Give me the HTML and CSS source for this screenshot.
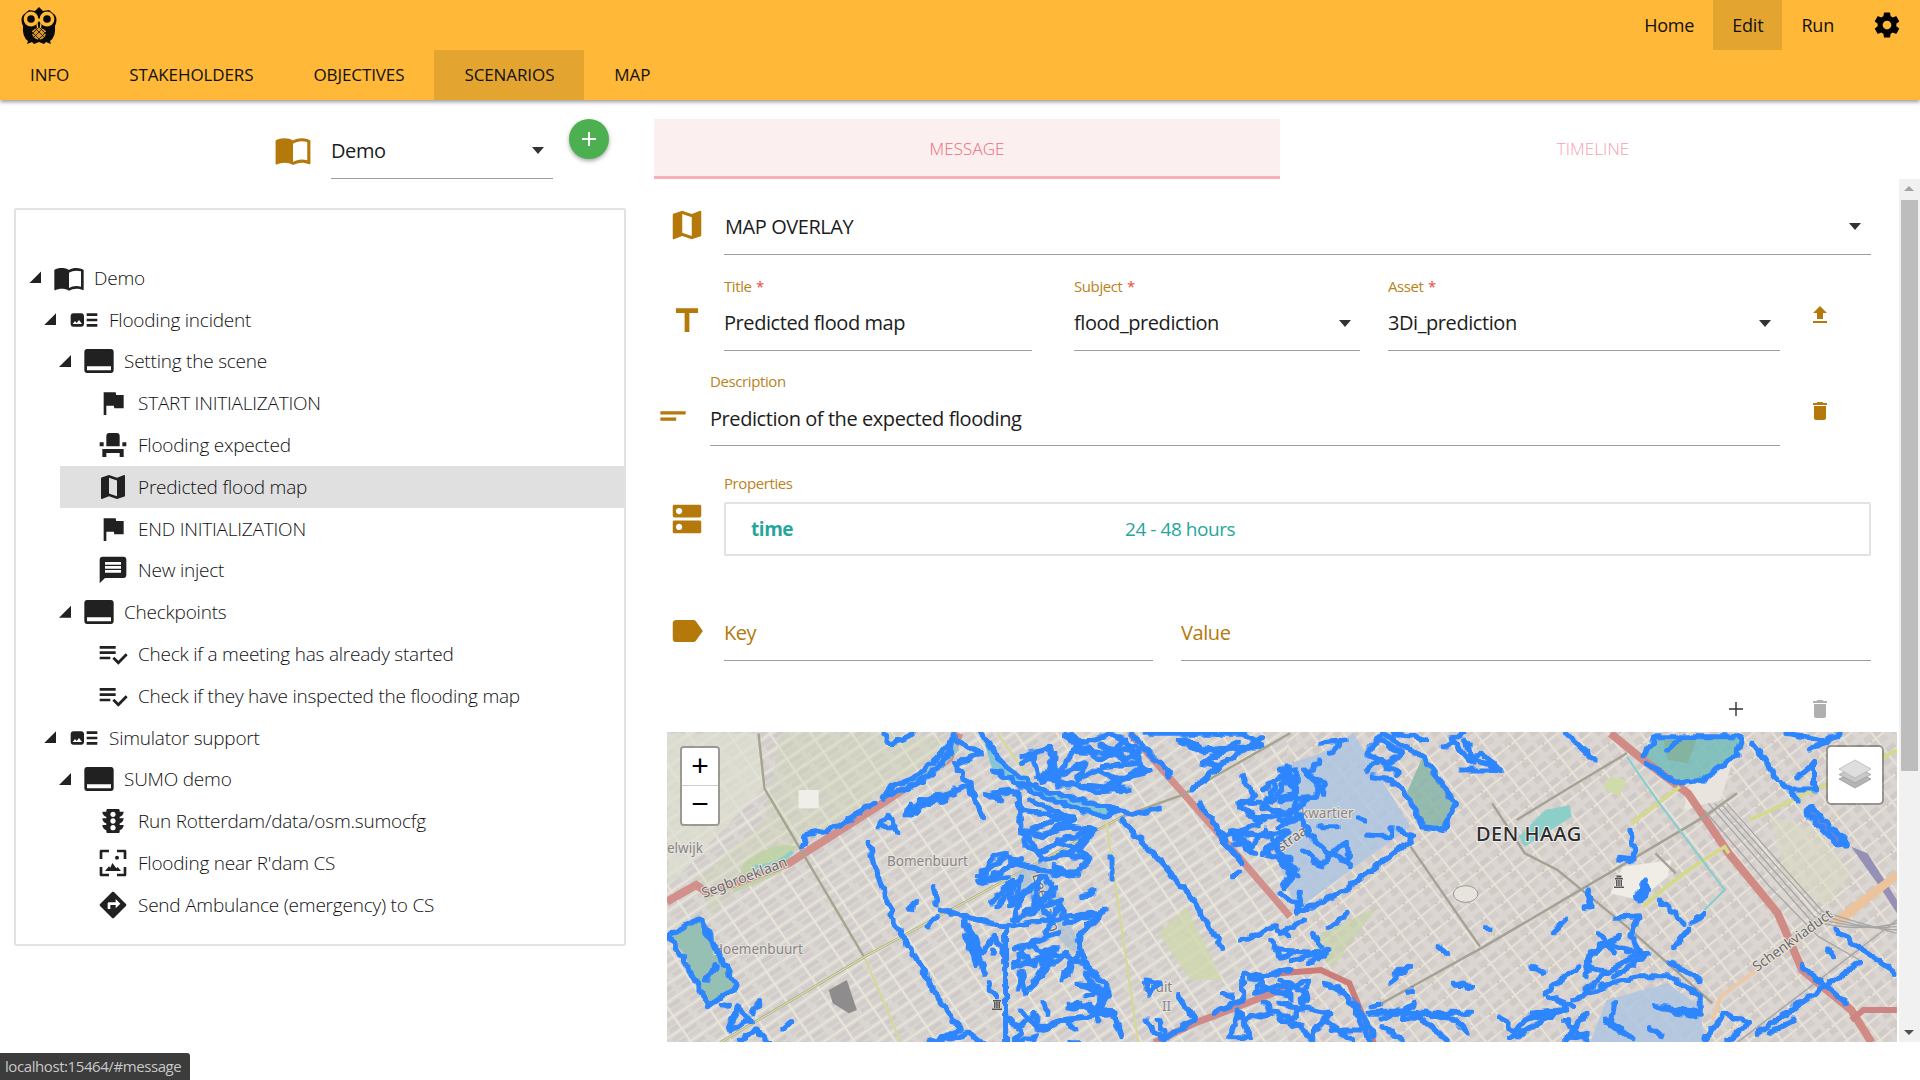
FILE: index.html
```html
<!DOCTYPE html>
<html lang="en">
<head>
<meta charset="utf-8">
<title>Scenario editor</title>
<link rel="stylesheet" href="styles.css">
</head>
<body>
<header class="appbar">
  <div class="appbar-top">
    <svg class="logo" viewBox="0 0 38 38">
      <path d="M3 8 L9 3 L15 4 L19 0 L23 4 L29 3 L35 8 Q38 13 35 19 Q36 30 30 34 L31 37 L26 35 L24 37 L19 35 L14 37 L12 35 L7 37 L8 34 Q2 30 3 19 Q0 13 3 8Z" fill="#0a0a0a"/>
      <circle cx="11" cy="12" r="7.4" fill="#ffb838"/><circle cx="27" cy="12" r="7.4" fill="#ffb838"/>
      <circle cx="11" cy="12" r="3.8" fill="#0a0a0a"/><circle cx="27" cy="12" r="3.8" fill="#0a0a0a"/>
      <path d="M19 11 L22 15 L21 21 H17 L16 15Z" fill="#ffb838"/><path d="M19 14 L20.4 16 L19.8 20 H18.2 L17.6 16Z" fill="#0a0a0a"/>
      <path d="M12 24 Q19 17 26 24 Q27 31 19 33 Q11 31 12 24Z" fill="#d9962a"/>
      <path d="M12 25 L20 33 M15 21 L26 32 M19 20 L27 28 M26 25 L18 33 M23 21 L12 32 M19 20 L11 28" stroke="#0a0a0a" stroke-width=".8" fill="none"/>
    </svg>
    <nav class="topnav">
      <a class="topnav-link">Home</a>
      <a class="topnav-link is-active">Edit</a>
      <a class="topnav-link">Run</a>
      <svg class="gear" viewBox="0 0 24 24"><path d="M19.43 12.98c.04-.32.07-.64.07-.98s-.03-.66-.07-.98l2.11-1.65c.19-.15.24-.42.12-.64l-2-3.46c-.12-.22-.39-.3-.61-.22l-2.49 1c-.52-.4-1.08-.73-1.69-.98l-.38-2.65C14.46 2.18 14.25 2 14 2h-4c-.25 0-.46.18-.49.42l-.38 2.65c-.61.25-1.17.59-1.69.98l-2.49-1c-.23-.09-.49 0-.61.22l-2 3.46c-.13.22-.07.49.12.64l2.11 1.65c-.04.32-.07.65-.07.98s.03.66.07.98l-2.11 1.65c-.19.15-.24.42-.12.64l2 3.46c.12.22.39.3.61.22l2.49-1c.52.4 1.08.73 1.69.98l.38 2.65c.03.24.24.42.49.42h4c.25 0 .46-.18.49-.42l.38-2.65c.61-.25 1.17-.59 1.69-.98l2.49 1c.23.09.49 0 .61-.22l2-3.46c.12-.22.07-.49-.12-.64l-2.11-1.65zM12 15.5c-1.93 0-3.5-1.57-3.5-3.5s1.57-3.5 3.5-3.5 3.5 1.57 3.5 3.5-1.57 3.5-3.5 3.5z"/></svg>
    </nav>
  </div>
  <nav class="apptabs">
    <a class="apptab">INFO</a>
    <a class="apptab">STAKEHOLDERS</a>
    <a class="apptab">OBJECTIVES</a>
    <a class="apptab is-active">SCENARIOS</a>
    <a class="apptab">MAP</a>
  </nav>
</header>

<main class="workspace">
  <aside class="sidebar">
    <div class="scenario-select">
      <svg class="icon-lg gold" viewBox="0 0 24 24"><path d="M21 5c-1.11-.35-2.33-.5-3.5-.5-1.95 0-4.05.4-5.5 1.5-1.45-1.1-3.55-1.5-5.5-1.5S2.45 4.9 1 6v14.65c0 .25.25.5.5.5.1 0 .15-.05.25-.05C3.1 20.45 5.05 20 6.5 20c1.95 0 4.05.4 5.5 1.5 1.35-.85 3.8-1.5 5.5-1.5 1.65 0 3.35.3 4.75 1.05.1.05.15.05.25.05.25 0 .5-.25.5-.5V6c-.6-.45-1.25-.75-2-1zm0 13.5c-1.1-.35-2.3-.5-3.5-.5-1.7 0-4.15.65-5.5 1.5V8c1.35-.85 3.8-1.5 5.5-1.5 1.2 0 2.4.15 3.5.5v11.5z"/></svg>
      <div class="select select-scenario"><span>Demo</span><i class="caret"></i></div>
      <button class="fab"><svg viewBox="0 0 24 24"><path d="M19 13h-6v6h-2v-6H5v-2h6V5h2v6h6v2z"/></svg></button>
    </div>
    <div class="tree">
      <div class="node lv0"><i class="twist"></i><svg class="node-icon" viewBox="0 0 24 24"><use href="#i-book"/></svg><span>Demo</span></div>
      <div class="node lv1"><i class="twist"></i><svg class="node-icon" viewBox="0 0 24 24"><use href="#i-art"/></svg><span>Flooding incident</span></div>
      <div class="node lv2"><i class="twist"></i><svg class="node-icon" viewBox="0 0 24 24"><use href="#i-cta"/></svg><span>Setting the scene</span></div>
      <div class="node lv3"><i class="twist-none"></i><svg class="node-icon" viewBox="0 0 24 24"><use href="#i-flag"/></svg><span>START INITIALIZATION</span></div>
      <div class="node lv3"><i class="twist-none"></i><svg class="node-icon" viewBox="0 0 24 24"><use href="#i-seat"/></svg><span>Flooding expected</span></div>
      <div class="node lv3 is-selected"><i class="twist-none"></i><svg class="node-icon" viewBox="0 0 24 24"><use href="#i-map"/></svg><span>Predicted flood map</span></div>
      <div class="node lv3"><i class="twist-none"></i><svg class="node-icon" viewBox="0 0 24 24"><use href="#i-flag"/></svg><span>END INITIALIZATION</span></div>
      <div class="node lv3"><i class="twist-none"></i><svg class="node-icon" viewBox="0 0 24 24"><use href="#i-msg"/></svg><span>New inject</span></div>
      <div class="node lv2"><i class="twist"></i><svg class="node-icon" viewBox="0 0 24 24"><use href="#i-cta"/></svg><span>Checkpoints</span></div>
      <div class="node lv3"><i class="twist-none"></i><svg class="node-icon" viewBox="0 0 24 24"><use href="#i-check"/></svg><span>Check if a meeting has already started</span></div>
      <div class="node lv3"><i class="twist-none"></i><svg class="node-icon" viewBox="0 0 24 24"><use href="#i-check"/></svg><span>Check if they have inspected the flooding map</span></div>
      <div class="node lv1"><i class="twist"></i><svg class="node-icon" viewBox="0 0 24 24"><use href="#i-art"/></svg><span>Simulator support</span></div>
      <div class="node lv2"><i class="twist"></i><svg class="node-icon" viewBox="0 0 24 24"><use href="#i-cta"/></svg><span>SUMO demo</span></div>
      <div class="node lv3"><i class="twist-none"></i><svg class="node-icon" viewBox="0 0 24 24"><use href="#i-traffic"/></svg><span>Run Rotterdam/data/osm.sumocfg</span></div>
      <div class="node lv3"><i class="twist-none"></i><svg class="node-icon" viewBox="0 0 24 24"><use href="#i-frame"/></svg><span>Flooding near R'dam CS</span></div>
      <div class="node lv3"><i class="twist-none"></i><svg class="node-icon" viewBox="0 0 24 24"><use href="#i-dir"/></svg><span>Send Ambulance (emergency) to CS</span></div>
    </div>
  </aside>

  <section class="editor">
    <div class="editor-tabs">
      <a class="editor-tab is-active">MESSAGE</a>
      <a class="editor-tab">TIMELINE</a>
    </div>
    <div class="editor-body">
      <div class="form">
        <div class="row row-type">
          <svg class="icon-lg gold icon-col" viewBox="0 0 24 24"><use href="#i-map"/></svg>
          <div class="select select-type"><span>MAP OVERLAY</span><i class="caret"></i></div>
        </div>

        <div class="row row-title">
          <svg class="icon-lg gold icon-title" viewBox="0 0 24 24"><path d="M5 4v3h5.500v12h3V7H19V4z"/></svg>
          <div class="field field-title"><label>Title <b>*</b></label><div class="value">Predicted flood map</div></div>
          <div class="field field-subject"><label>Subject <b>*</b></label><div class="value value-select"><span>flood_prediction</span><i class="caret"></i></div></div>
          <div class="field field-asset"><label>Asset <b>*</b></label><div class="value value-select"><span>3Di_prediction</span><i class="caret"></i></div></div>
          <svg class="icon-sm gold icon-upload" viewBox="0 0 24 24"><path d="M9 16h6v-6h4l-7-7-7 7h4zm-4 2h14v2H5z"/></svg>
        </div>

        <div class="row row-desc">
          <svg class="icon-lg gold icon-desc" viewBox="0 0 24 24"><path d="M4 9h16v2H4zm0 4h10v2H4z"/></svg>
          <div class="field field-desc"><label>Description</label><div class="value">Prediction of the expected flooding</div></div>
          <svg class="icon-sm gold icon-trash" viewBox="0 0 24 24"><use href="#i-del"/></svg>
        </div>

        <div class="row row-props">
          <svg class="icon-lg gold icon-props" viewBox="0 0 24 24"><path d="M20 13H4c-.55 0-1 .45-1 1v6c0 .55.45 1 1 1h16c.55 0 1-.45 1-1v-6c0-.55-.45-1-1-1zM7 19c-1.100 0-2-.9-2-2s.9-2 2-2 2 .9 2 2-.9 2-2 2zM20 3H4c-.55 0-1 .45-1 1v6c0 .55.45 1 1 1h16c.55 0 1-.45 1-1V4c0-.55-.45-1-1-1zM7 9c-1.100 0-2-.9-2-2s.9-2 2-2 2 .9 2 2-.9 2-2 2z"/></svg>
          <div class="props">
            <label>Properties</label>
            <div class="props-box"><span class="prop-key">time</span><span class="prop-val">24 - 48 hours</span></div>
          </div>
        </div>

        <div class="row row-kv">
          <svg class="icon-lg gold icon-label" viewBox="0 0 24 24"><path d="M17.63 5.84C17.27 5.33 16.67 5 16 5L5 5.010C3.900 5.010 3 5.900 3 7v10c0 1.100.9 1.990 2 1.990L16 19c.67 0 1.270-.33 1.630-.84L22 12l-4.370-6.160z"/></svg>
          <div class="input input-key">Key</div>
          <div class="input input-val">Value</div>
        </div>

        <div class="row row-actions">
          <svg class="icon-sm icon-add" viewBox="0 0 24 24"><path d="M19 12.700h-6.300V19h-1.400v-6.300H5v-1.400h6.300V5h1.400v6.300H19z"/></svg>
          <svg class="icon-sm icon-off" viewBox="0 0 24 24"><use href="#i-del"/></svg>
        </div>

        <div class="map">
          <svg class="map-art" viewBox="0 0 1230 310" preserveAspectRatio="none">
            <defs>
              <pattern id="blocksA" width="34" height="15" patternUnits="userSpaceOnUse" patternTransform="rotate(-34)">
                <rect width="34" height="15" fill="#dad6d2"/>
                <rect x="2" y="2" width="13" height="4" fill="#d3cecb"/><rect x="18" y="2" width="13" height="4" fill="#cfcac8"/>
                <rect x="5" y="8" width="10" height="4" fill="#d1ccca"/><rect x="18" y="8" width="14" height="4" fill="#d4cfcc"/>
                <path d="M0 14.500H34M16.500 0V15" stroke="#ece9dc" stroke-width="1.400"/>
              </pattern>
              <pattern id="blocksB" width="26" height="20" patternUnits="userSpaceOnUse" patternTransform="rotate(-38)">
                <rect width="26" height="20" fill="#dcd6d2"/>
                <rect x="2" y="2" width="9" height="6" fill="#d3cdca"/><rect x="14" y="3" width="10" height="5" fill="#cfc9c7"/>
                <rect x="3" y="11" width="8" height="6" fill="#d0cac8"/><rect x="14" y="11" width="9" height="6" fill="#d5cfcc"/>
                <path d="M0 9.500H26M12.500 0V20" stroke="#ebe7da" stroke-width="1.200"/>
                <circle cx="7" cy="9" r=".8" fill="#c59a88"/>
              </pattern>
              <filter id="soft" x="0" y="0" width="100%" height="100%"><feGaussianBlur stdDeviation=".45"/></filter>
              <filter id="jag" x="-2%" y="-2%" width="104%" height="104%" filterUnits="objectBoundingBox">
                <feTurbulence type="fractalNoise" baseFrequency=".05" numOctaves="1" seed="7" result="n"/>
                <feDisplacementMap in="SourceGraphic" in2="n" scale="24" xChannelSelector="R" yChannelSelector="G" result="d"/>
                <feMorphology in="d" operator="dilate" radius="3.500"/>
              </filter>
            </defs>
            <g filter="url(#soft)">
              <rect width="1230" height="310" fill="url(#blocksA)"/>
              <rect x="620" width="610" height="310" fill="url(#blocksB)"/>
              <g transform="translate(-7 -12) scale(.4018 .3333)">
                <path d="M17 40H240L260 200L20 500Z" fill="#dedfd2" opacity=".7"/>
                <path d="M300 40L600 40L740 60L520 250L340 380L200 500L130 590L90 480L260 300Z" fill="#cdd6b4" opacity=".35"/>
                <path d="M210 430Q280 360 340 380L300 460L180 520Z" fill="#bcd2a0" opacity=".8"/>
                <path d="M135 510Q230 490 240 440Q290 440 330 395" stroke="#86cfcf" stroke-width="4" fill="none" vector-effect="non-scaling-stroke"/>
                <rect x="345" y="210" width="50" height="55" fill="#f0eee8"/>
                <path d="M1240 640L1310 560L1400 780L1320 780Z" fill="#cfd8ae" opacity=".8"/>
                <path d="M420 810L465 780L490 870L470 880L430 850Z" fill="#8e8c8c"/>
                <path d="M17 545L90 495L120 520L320 430L560 245L720 115L745 40" stroke="#d2908c" stroke-width="8" fill="none" vector-effect="non-scaling-stroke"/>
                <path d="M1170 40L1390 340L1568 590" stroke="#d2908c" stroke-width="7" fill="none" vector-effect="non-scaling-stroke"/>
                <path d="M1230 968L1330 910L1568 800" stroke="#cf8a8a" stroke-width="7" fill="none" vector-effect="non-scaling-stroke"/>
                <path d="M245 40L260 205L510 715M150 968L510 710L1150 290L1300 225L1568 40" stroke="#a5a58f" stroke-width="2.400" fill="none" vector-effect="non-scaling-stroke"/>
                <path d="M150 968L510 710L1150 290" stroke="#d9dd9a" stroke-width="1.200" fill="none" vector-effect="non-scaling-stroke"/>
                <path d="M510 715L600 968M840 40L950 230M1110 300L1190 968" stroke="#d5d99a" stroke-width="2.200" fill="none" vector-effect="non-scaling-stroke"/>
                <path d="M800 40L850 130L950 210L1140 270L1100 290L950 230L830 160Z" fill="#86c5d2"/>
                <path d="M570 230L700 110L730 60L745 90L680 170Z" fill="#9cc5c8"/>
                <path d="M20 650L100 595L190 800L120 860L95 800L60 700Z" fill="#97c0b4"/>
                <path d="M880 460L960 420L1050 700L1020 690L950 600Z" fill="#a9bfd3" opacity=".7"/>
              </g>
              <g transform="translate(613 -12) scale(.408 .3333)">
                <path d="M180 40L320 320L40 570L0 440L0 140L100 100Z" fill="#aec6e0" opacity=".85"/>
                <path d="M310 220L350 110L430 250L400 330L350 320Z" fill="#83b3a5" opacity=".8"/>
                <path d="M890 110L920 50L1130 50L1120 100L1040 180L970 190Z" fill="#74bcb8" opacity=".85"/>
                <path d="M940 60L1020 60L1000 130L950 120Z" fill="#84b09a" opacity=".8"/>
                <path d="M650 270L710 255L715 290L600 380L585 350Z" fill="#8ccfc9"/>
                <path d="M800 840L950 790L1030 860L1040 968H760Z" fill="#aec6e0" opacity=".85"/>
                <path d="M810 170L850 180L830 230L790 200Z" fill="#cfdcaa"/>
                <path d="M100 640L240 560L130 740L80 700Z" fill="#c4d3a4" opacity=".6"/>
                <path d="M1200 290L1300 320L1400 460L1340 560L1240 480Z" fill="#d7dcc0" opacity=".5"/>
                <path d="M1400 380L1440 400L1512 540V580L1470 500Z" fill="#9790b6"/>
                <path d="M1350 600L1512 450V480L1370 620Z" fill="#ecc39b"/>
                <path d="M1300 270L1390 370L1370 380L1290 280Z" fill="#7c83c4"/>
                <path d="M840 440L960 420L950 470L880 540L810 520Z" fill="#f0ede6"/>
                <path d="M1000 200L1110 120L1080 240L990 270Z" fill="#e9e5de"/>
                <path d="M810 40L880 110L1000 220L1100 400L1220 580L1280 750L1400 870L1450 968" stroke="#d08b84" stroke-width="8" fill="none" vector-effect="non-scaling-stroke"/>
                <path d="M0 760L100 750L170 790L230 968" stroke="#cd7d78" stroke-width="6" fill="none" vector-effect="non-scaling-stroke"/>
                <path d="M1512 870L1430 870L1400 900" stroke="#cd8583" stroke-width="6" fill="none" vector-effect="non-scaling-stroke"/>
                <path d="M250 850L500 680L750 500L1040 290L1120 220M320 380L490 680M520 250L600 400L680 450L850 620L1060 850M850 100L700 210L580 300M920 400L970 460" stroke="#a4a294" stroke-width="2.400" fill="none" vector-effect="non-scaling-stroke"/>
                <path d="M860 310L980 200M890 560Q980 460 1090 380L1100 400M1150 300L1400 160L1512 90" stroke="#d5da88" stroke-width="3.500" fill="none" vector-effect="non-scaling-stroke"/>
                <path d="M850 110L930 250L1090 510L1040 570" stroke="#86cdd0" stroke-width="2" fill="none" vector-effect="non-scaling-stroke"/>
                <path d="M1050 250L1300 600Q1400 640 1512 610M1065 250L1310 590Q1400 630 1512 620M1080 250L1320 580Q1400 620 1512 630M1095 250L1330 575Q1420 610 1512 640M1040 270L1200 500L1320 650L1420 720M1512 600L1300 800L1120 968" stroke="#a6a6a6" stroke-width="1.300" fill="none" vector-effect="non-scaling-stroke"/>
                <path d="M1340 600L1180 740L1080 830L1060 900" stroke="#ecc9a6" stroke-width="4" fill="none" vector-effect="non-scaling-stroke"/>
                <ellipse cx="455" cy="522" rx="30" ry="25" fill="#e7e4de" stroke="#999" stroke-width="1" vector-effect="non-scaling-stroke"/>
              </g>
            </g>

            <g class="map-labels">
              <text class="ml" x="0" y="121">elwijk</text>
              <text class="ml" x="220" y="134" font-size="14">Bomenbuurt</text>
              <text class="ml ml-road" transform="translate(37 166) rotate(-21)">Segbroeklaan</text>
              <text class="ml" x="46" y="222">Hoemenbuurt</text>
              <text class="ml ml-road" transform="translate(365 143) rotate(72)">Beeklaan</text>
              <text class="ml" x="475" y="260">Vruit</text>
              <text class="ml" x="495" y="279">II</text>
              <text class="ml" x="634" y="86" >kwartier</text>
              <text class="ml ml-road" transform="translate(614 120) rotate(-35)">straat</text>
              <text class="ml ml-city" x="809" y="109">DEN HAAG</text>
              <text class="ml ml-road" transform="translate(1090 240) rotate(-36)">Schenkviaduct</text>
            </g>

            <g transform="translate(-7 -12) scale(.4018 .3333)">
              <g filter="url(#jag)" class="flood">
                <path d="M555 40L575 72L600 60L630 42"/>
                <path d="M555 235L575 200L640 170L700 100L735 50L720 100L680 160L620 200Z"/>
                <path d="M352 380L370 340L420 330L470 300L530 250"/>
                <path d="M520 370L530 430L560 520L580 600L640 720L700 850L750 930L670 968"/>
                <path d="M620 285L650 240L720 220L770 190L800 290"/>
                <path d="M735 130L790 250M735 60L800 100L740 130"/>
                <path d="M550 310L570 280L590 335M545 320H590"/>
                <path d="M800 40L850 130L950 210L1140 270L1100 290L950 230L830 150"/>
                <path d="M900 110L970 85L990 170L1040 70L1100 120L1160 60L1190 130L1210 150L1100 200L1010 190L940 170"/>
                <path d="M1010 40L1060 70L1120 40L1180 80L1100 100L1040 95L1010 40"/>
                <path d="M820 230L890 210L900 340L980 300L1030 290L950 350L910 330"/>
                <path d="M920 240L1030 300M1000 360L1080 330L1020 400L950 420L915 350"/>
                <path d="M1125 410V475M1150 300L1250 430L1320 530L1400 685"/>
                <path d="M1170 40L1270 165M1210 40H1450L1500 75L1350 95L1290 65"/>
                <path d="M1320 210L1400 130L1500 50M1340 250L1400 340M1430 470L1440 450"/>
                <path d="M1450 170L1480 230L1440 260L1500 300L1440 340L1480 400L1420 340L1390 345L1450 430M1500 210L1568 150M1480 300L1568 280M1520 340L1568 470"/>
                <path d="M20 650L100 595L190 800L120 860L95 800L50 700Z"/>
                <path d="M115 780L140 740M155 855L175 850M170 925L195 860L225 900L175 930M230 880L250 845M200 960L240 930L270 968"/>
                <path d="M305 925L325 905M620 565L640 545M665 620L685 590M680 500L692 555"/>
                <path d="M790 470L860 410L900 420L830 470L790 490L860 470M840 560L900 470L880 540L960 470L980 520L910 580L1000 540L960 640"/>
                <path d="M700 570L860 620L1100 575L1040 650L1060 740L1110 800L1080 880M920 680L1060 730"/>
                <path d="M750 590L810 760M860 620V968M880 690L990 640M890 740L970 700L920 810M1000 770L1040 700M830 690V700M815 790L835 830"/>
                <path d="M1040 790L1110 810L1060 830M1020 850L1130 880L1000 900L940 930L900 870M860 890L900 930M950 850L970 880"/>
                <path d="M1000 400L1070 420L1040 460L980 440M1050 530L1080 515M1150 950L1130 890"/>
                <path d="M1210 780L1240 790L1220 820L1205 790M1210 900L1250 960L1330 900L1290 830M1240 900L1260 950"/>
                <path d="M1380 880L1450 840L1450 760L1500 770L1568 750M1400 820L1430 830M1420 950L1440 870L1470 950Z"/>
                <path d="M1445 665L1530 620L1568 650M1520 660L1550 720L1568 700M1500 800L1568 830"/>
                <path d="M1430 370L1470 380L1510 330M1390 345L1450 430"/>
                <path d="M680 968L770 940L800 968M880 968L940 950M1020 968H1040"/>
                <path d="M905 130L925 110L950 190L985 100L975 170L1020 150L1060 130L1040 180L1090 150L1140 180L1190 150L1215 150L1190 165L1120 190L1170 210L1090 215L1040 195L990 195L970 140"/>
                <path d="M1100 75L1160 120L1190 90L1190 130L1100 140M1300 60L1380 95L1440 70L1350 130L1390 140L1360 180"/>
                <path d="M810 225L850 240L830 215L880 210L900 270L1000 290L1030 300L960 345L1010 320L1080 330L1040 390L1070 410"/>
                <path d="M895 300L910 380L950 400L990 365L1030 380M1120 260L1180 285L1240 265M610 285L625 255L640 280L660 250L700 240L730 225"/>
                <path d="M800 480L830 410L860 400L880 430L950 450L1000 460L1030 470L980 460M820 550L880 480L870 560L940 490L930 550L990 500"/>
                <path d="M900 540L880 600L950 560L970 600L1000 560L1010 610L1070 590L1105 570M760 600L800 700L830 650L860 700M760 650L790 740"/>
                <path d="M880 740L900 700L930 740L960 690L990 680L950 760L920 810L960 750L1010 700L1030 740L1000 780M890 810L900 760L910 820"/>
                <path d="M1060 760L1100 830L1060 800L1120 810L1090 880L1040 850M1010 870L1070 850L1090 900M870 890L890 930L930 880L950 930L1010 900L1030 930M880 960L900 940"/>
                <path d="M1440 250H1520L1560 180M1420 330L1500 350L1568 330L1500 400L1568 420M1530 200L1500 260L1568 290M1470 780L1500 770L1480 820L1560 790L1568 840M1500 850L1568 900M1450 900L1520 880"/>
              </g>
            </g>
            <g transform="translate(613 -12) scale(.408 .3333)">
              <g filter="url(#jag)" class="flood">
                <path d="M100 70L160 60L120 100M210 100L250 40L350 110L430 250L400 330L350 320L310 220L270 180L230 170"/>
                <path d="M0 150H40V300L0 320M60 150L110 220M0 240L70 230M20 280L70 240"/>
                <path d="M290 330L330 350L160 510L40 580L50 520"/>
                <path d="M280 40L360 60M450 60L480 120L540 150L440 150M400 80L450 40"/>
                <path d="M700 40L770 120M890 110L920 50L1130 50L1120 100L1040 180L970 190L900 130M950 90L980 60"/>
                <path d="M1160 70L1220 180M1270 170L1310 130L1310 210L1260 210M1230 190L1270 240M1240 40L1330 60M1300 90L1370 40"/>
                <path d="M1300 260L1390 370L1370 375L1290 280Z"/>
                <path d="M860 330L870 420L835 415M895 480L875 540L905 510Z"/>
                <path d="M750 510L765 560L745 565M700 600L670 635M505 620L515 625"/>
                <path d="M390 680L410 700M620 740L650 760M270 790L320 740L280 760M120 625L165 580M430 790L470 800L440 800"/>
                <path d="M310 820L325 810M225 860L245 850M60 390L100 440L130 400L170 430M0 400L40 450L10 500M30 720L120 690L70 730"/>
                <path d="M100 320H140M215 345L270 350L275 320M190 290L210 300"/>
                <path d="M820 595L880 590L860 640L880 700L800 670L760 700L750 770M780 640L820 700"/>
                <path d="M650 820L730 740M660 830L720 860M820 770L900 700M720 840L810 790L880 770L960 770L1030 830L1030 880L920 860"/>
                <path d="M930 540L990 610M1010 610L1040 580M965 680L1000 630L985 660M800 900L840 930"/>
                <path d="M1360 630L1510 760M1280 740L1390 850M1170 940L1300 830L1420 730M1340 690L1355 710"/>
                <path d="M220 880L470 880M250 920L300 960M340 890L410 960M540 890L580 950L700 860M600 900L680 870"/>
                <path d="M700 900L750 960M820 850L810 920L860 950M910 920L940 950M1040 960L1090 880L1150 910L1100 960M1200 940L1260 900"/>
                <path d="M0 780L70 820L30 900L80 960M0 850L60 870M110 790L170 830L220 968M110 900L180 960M130 930L200 930"/>
                <path d="M0 170L30 170L40 220L0 230M20 140L30 210M50 250L90 220L110 190L70 160L95 120M0 300L50 290L70 340L120 400L165 370L170 440M0 420L40 470M0 520L50 560"/>
                <path d="M210 150L240 120L290 160M250 60L300 100L260 130L210 100M420 60L470 130L490 100L530 140"/>
                <path d="M0 640L60 600M80 640L100 680M0 690L110 700L90 720M0 820L70 780L50 860L120 880L80 940M0 900L50 920M140 800L190 860L230 950"/>
                <path d="M250 900L330 850L300 900L360 880L430 900L460 940M560 950L620 880L700 870M750 880L700 960L750 940M800 760L880 700"/>
                <path d="M770 700L830 650M760 740L800 760L750 810M920 860L1020 890M1030 780L960 730"/>
              </g>
            </g>
            <path class="poi" d="M948 146h8v1.500h-8zM949 148h1.500v6H949zM953.500 148h1.500v6h-1.500zM951.200 148h1.500v6h-1.500zM947 154.500h10v1.500h-10zM949.500 143.500h5v2h-5z"/>
            <path class="poi" d="M948 146h8v1.500h-8zM949 148h1.500v6H949zM953.500 148h1.500v6h-1.500zM951.200 148h1.500v6h-1.500zM947 154.500h10v1.500h-10z" transform="translate(-622 122)"/>
          </svg>

          <div class="zoom-ctl"><a class="zoom-btn">+</a><a class="zoom-btn">&#8722;</a></div>
          <div class="layers-ctl">
            <svg viewBox="0 0 36 36">
              <path d="M18 14 L34 22 L18 31 L2 22Z" fill="#b5b5b5" stroke="#8e8e8e" stroke-width=".7"/>
              <path d="M18 9 L34 17.500 L18 26 L2 17.500Z" fill="#c8c8c8" stroke="#999" stroke-width=".7"/>
              <path d="M18 3 L34 12 L18 21 L2 12Z" fill="#dedede" stroke="#b0b0b0" stroke-width=".7"/>
            </svg>
          </div>
        </div>
      </div>
      <div class="scrollbar">
        <i class="sb-up"></i>
        <div class="sb-thumb"></div>
        <i class="sb-down"></i>
      </div>
    </div>
  </section>
</main>

<div class="status">localhost:15464/#message</div>

<svg class="sprite" aria-hidden="true">
  <symbol id="i-book" viewBox="0 0 24 24"><path d="M21 5c-1.110-.35-2.330-.5-3.500-.5-1.950 0-4.050.4-5.500 1.500-1.450-1.100-3.550-1.500-5.500-1.500S2.450 4.900 1 6v14.650c0 .25.25.5.5.5.1 0 .15-.05.25-.05C3.100 20.450 5.050 20 6.500 20c1.950 0 4.050.4 5.500 1.500 1.350-.85 3.800-1.500 5.500-1.500 1.650 0 3.350.3 4.750 1.050.1.05.15.05.25.05.25 0 .5-.25.5-.5V6c-.6-.45-1.250-.75-2-1zm0 13.500c-1.100-.35-2.300-.5-3.500-.5-1.700 0-4.150.65-5.500 1.500V8c1.350-.85 3.800-1.500 5.500-1.500 1.200 0 2.400.15 3.500.5v11.500z"/></symbol>
  <symbol id="i-art" viewBox="0 0 24 24"><path d="M22 13h-8v-2h8v2zm0-6h-8v2h8V7zm-8 10h8v-2h-8v2zm-2-8v6c0 1.100-.9 2-2 2H4c-1.100 0-2-.9-2-2V9c0-1.100.9-2 2-2h6c1.100 0 2 .9 2 2zm-1.500 6l-2.250-3-1.750 2.260-1.250-1.510L3.500 15h7z"/></symbol>
  <symbol id="i-cta" viewBox="0 0 24 24"><path fill-rule="evenodd" d="M21 3H3c-1.100 0-2 .9-2 2v14c0 1.100.9 2 2 2h18c1.100 0 2-.9 2-2V5c0-1.100-.9-2-2-2zM3 16h18v3H3z"/></symbol>
  <symbol id="i-flag" viewBox="0 0 24 24"><path d="M14.400 6L14 4H5v17h2v-7h5.600l.4 2h7V6z"/></symbol>
  <symbol id="i-seat" viewBox="0 0 24 24"><path d="M4 18v3h3v-3h10v3h3v-6H4zm15-8h3v3h-3zM2 10h3v3H2zm15 3H7V5c0-1.100.9-2 2-2h6c1.100 0 2 .9 2 2v8z"/></symbol>
  <symbol id="i-map" viewBox="0 0 24 24"><path d="M20.500 3l-.16.030L15 5.100 9 3 3.360 4.900c-.21.070-.36.25-.36.480V20.500c0 .28.22.5.5.5l.16-.03L9 18.900l6 2.100 5.640-1.900c.21-.07.36-.25.36-.48V3.500c0-.28-.22-.5-.5-.5zM15 19l-6-2.110V5l6 2.110V19z"/></symbol>
  <symbol id="i-msg" viewBox="0 0 24 24"><path d="M20 2H4c-1.100 0-1.990.9-1.990 2L2 22l4-4h14c1.100 0 2-.9 2-2V4c0-1.100-.9-2-2-2zm-2 12H6v-2h12v2zm0-3H6V9h12v2zm0-3H6V6h12v2z"/></symbol>
  <symbol id="i-check" viewBox="0 0 24 24"><path d="M14 10H2v2h12v-2zm0-4H2v2h12V6zM2 16h8v-2H2v2zm19.500-4.500L23 13l-6.990 7-4.510-4.500L13 14l3.010 3 5.490-5.500z"/></symbol>
  <symbol id="i-traffic" viewBox="0 0 24 24"><path d="M20 10h-3V8.860c1.720-.45 3-2 3-3.860h-3V4c0-.55-.45-1-1-1H8c-.55 0-1 .45-1 1v1H4c0 1.860 1.280 3.410 3 3.860V10H4c0 1.860 1.280 3.410 3 3.860V15H4c0 1.860 1.280 3.410 3 3.860V20c0 .55.45 1 1 1h8c.55 0 1-.45 1-1v-1.140c1.720-.45 3-2 3-3.860h-3v-1.140c1.720-.45 3-2 3-3.860zm-8 9c-1.110 0-2-.9-2-2s.89-2 2-2c1.100 0 2 .9 2 2s-.89 2-2 2zm0-5c-1.110 0-2-.9-2-2s.89-2 2-2c1.100 0 2 .9 2 2s-.89 2-2 2zm0-5c-1.110 0-2-.9-2-2 0-1.110.89-2 2-2 1.100 0 2 .89 2 2 0 1.100-.89 2-2 2z"/></symbol>
  <symbol id="i-frame" viewBox="0 0 24 24"><path d="M3 2h6v2H4v5H2V3c0-.55.45-1 1-1zm12 0h6c.55 0 1 .45 1 1v6h-2V4h-5V2zM2 15h2v5h5v2H3c-.55 0-1-.45-1-1v-6zm18 0h2v6c0 .55-.45 1-1 1h-6v-2h5v-5zM15 6.500a1.500 1.500 0 1 1 0 3 1.500 1.500 0 0 1 0-3zM11.500 12l3 4 1-1L18 18H6l3-3.500 1 1z"/></symbol>
  <symbol id="i-dir" viewBox="0 0 24 24"><path d="M21.710 11.290l-9-9c-.39-.39-1.020-.39-1.410 0l-9 9c-.39.39-.39 1.020 0 1.410l9 9c.39.39 1.020.39 1.410 0l9-9c.39-.38.39-1.010 0-1.410zM14 14.500V12h-4v3H8v-4c0-.55.45-1 1-1h5V7.500l3.500 3.500-3.500 3.500z"/></symbol>
  <symbol id="i-del" viewBox="0 0 24 24"><path d="M6 19c0 1.100.9 2 2 2h8c1.100 0 2-.9 2-2V7H6v12zM19 4h-3.500l-1-1h-5l-1 1H5v2h14V4z"/></symbol>
</svg>
</body>
</html>
```
FILE: styles.css
```css
* { box-sizing: border-box; }
html, body { margin: 0; height: 100%; overflow: hidden; background: #fff; }
body {
  font-family: "Open Sans", "Noto Sans", "Liberation Sans", sans-serif;
  font-weight: 400;
  color: #1c1c1c;
  display: flex;
  flex-direction: column;
  position: relative;
}
svg { display: block; fill: currentColor; flex: none; }
.sprite { width: 0; height: 0; position: absolute; }
a { color: inherit; text-decoration: none; }
.gold { color: #b5780b; }

/* app bar */
.appbar {
  height: 100px;
  background: #ffb838;
  box-shadow: 0 2px 4px rgba(0, 0, 0, .4);
  flex: none;
  position: relative;
  z-index: 2;
  color: #111;
}
.appbar-top { height: 50px; display: flex; justify-content: space-between; }
.logo { width: 38px; height: 38px; margin: 7px 0 0 20px; color: #000; }
.topnav { display: flex; align-items: flex-start; padding-right: 18px; }
.topnav-link { height: 50px; line-height: 50px; padding: 0 19px; font-size: 18px; letter-spacing: -.2px; }
.topnav-link.is-active { background: #e3a530; }
.gear { width: 30px; height: 30px; margin: 10px 0 0 19px; color: #000; }
.apptabs { display: flex; height: 50px; }
.apptab { padding: 0 30px; line-height: 50px; font-size: 17px; letter-spacing: -.1px; }
.apptab.is-active { background: #e3a530; }

/* main */
.workspace { flex: none; display: flex; height: 980px; }
.sidebar { width: 654px; flex: none; }
.scenario-select { display: flex; align-items: flex-start; height: 108px; padding: 19px 0 0 274px; }
.icon-lg { width: 38px; height: 38px; }
.icon-sm { width: 24px; height: 24px; }
.scenario-select .icon-lg { margin-top: 12px; }
.select { display: flex; justify-content: space-between; align-items: center; border-bottom: 1px solid #9e9e9e; padding-right: 9px; font-size: 20px; letter-spacing: -.43px; }
.select-scenario { width: 222px; height: 60px; margin-left: 19px; padding-top: 3px; }
.caret { width: 0; height: 0; border: 6px solid transparent; border-top: 7px solid #333; border-bottom: 0; flex: none; }
.fab {
  width: 40px; height: 40px; margin: 0 0 0 16px; padding: 8px; border: 0; border-radius: 50%;
  background: #4caf50; color: #fff; box-shadow: 0 2px 4px rgba(0, 0, 0, .35);
}
.fab svg { width: 24px; height: 24px; }

/* tree */
.tree {
  margin-left: 14px; width: 612px; height: 738px;
  border: 2px solid #e2e2e2; border-radius: 2px;
  padding: 47px 0 0;
  font-size: 19px; letter-spacing: -.22px; font-weight: 300; color: #111;
}
.node { display: flex; align-items: center; height: 41.8px; padding-left: 13px; }
.node span { margin-left: 9px; white-space: nowrap; }
.lv1 { padding-left: 28px; }
.lv2 { padding-left: 43px; }
.lv3 { padding-left: 57px; }
.node.is-selected { background: #e0e0e0; margin-left: 44px; padding-left: 13px; }
.twist { width: 24px; height: 13px; flex: none; }
.twist::before { content: ""; display: block; width: 12px; height: 12px; background: #222; clip-path: polygon(100% 0, 100% 100%, 0 100%); }
.twist-none { width: 24px; flex: none; }
.node-icon { width: 32px; height: 32px; color: #212121; }

/* editor */
.editor { flex: 1; min-width: 0; display: flex; flex-direction: column; }
.editor-tabs { display: flex; height: 60px; margin-top: 19px; flex: none; padding-right: 14px; }
.editor-tab {
  flex: 1; text-align: center; line-height: 60px; font-size: 17px; letter-spacing: .1px; font-weight: 300;
  color: #f7a0b2; border-bottom: 3px solid transparent;
}
.editor-tab.is-active { background: #fcefef; color: #ef6a79; border-bottom-color: #f8afb5; }
.editor-body { flex: none; display: flex; height: 863px; }
.form { width: 1245px; flex: none; padding: 0 2px 0 13px; overflow: hidden; display: flex; flex-direction: column; }
.scrollbar { width: 21px; background: #f1f1f1; display: flex; flex-direction: column; align-items: center; position: relative; padding-top: 21px; }
.sb-thumb { width: 17px; height: 571px; background: #bdbdbd; }
.sb-up, .sb-down { position: absolute; left: 5px; width: 0; height: 0; border: 5px solid transparent; }
.sb-up { top: 7px; border-top: 0; border-bottom: 5px solid #a3a3a3; }
.sb-down { bottom: 7px; border-bottom: 0; border-top: 5px solid #505050; }

.row { display: flex; align-items: flex-start; flex: none; }
label { display: block; height: 24px; line-height: 21px; font-size: 15px; letter-spacing: -.4px; color: #bb8220; font-weight: 400; }
label b { color: #f44336; font-weight: 400; margin-left: 1px; }
.row-type { margin-top: 21px; height: 55px; padding-right: 26px; }
.row-type .icon-lg { margin-top: 6px; }
.icon-col { margin-left: 1px; }
.select-type { flex: 1; margin-left: 18px; height: 55px; padding: 0 10px 2px 1px; }
.row-title { margin-top: 21px; height: 75px; }
.icon-title { margin: 26px 0 0 1px; }
.field { border-bottom: 1px solid #9e9e9e; height: 75px; flex: none; }
.value { height: 47px; line-height: 47px; font-size: 20px; letter-spacing: -.43px; }
.row-title .value { height: 46px; line-height: 46px; }
.value-select { display: flex; justify-content: space-between; align-items: center; padding-right: 9px; }
.field-title { width: 308px; margin-left: 18px; }
.field-subject { width: 286px; margin-left: 42px; }
.field-asset { width: 392px; margin-left: 28px; }
.icon-upload { margin: 27px 0 0 28px; }
.row-desc { margin-top: 20px; height: 75px; margin-left: -13px; }
.icon-desc { margin-top: 26px; }
.field-desc { width: 1070px; margin-left: 18px; }
.icon-trash { margin: 28px 0 0 28px; }
.row-props { margin-top: 27px; height: 83px; padding-right: 26px; }
.icon-props { margin: 27px 0 0 1px; }
.props { flex: 1; margin-left: 18px; }
.props-box { display: flex; align-items: center; height: 54px; margin-top: 5px; border: 2px solid #e2e2e2; border-radius: 2px; padding-left: 25px; font-size: 19px; letter-spacing: -.45px; color: #26a69a; }
.prop-key { width: 374px; font-weight: 700; }
.row-kv { margin-top: 49px; height: 56px; padding-right: 26px; }
.icon-label { margin: 7px 0 0 1px; }
.input { height: 56px; line-height: 55px; border-bottom: 1px solid #9e9e9e; color: #b5780b; font-size: 20px; letter-spacing: -.43px; }
.input-key { width: 429px; margin-left: 18px; }
.input-val { flex: 1; margin-left: 28px; }
.row-actions { margin-top: 36px; height: 24px; justify-content: flex-end; padding-right: 65px; gap: 60px; }
.icon-add { color: #333; }
.icon-off { color: #b0b0b0; }

/* map */
.map { position: relative; margin-top: 11px; width: 1230px; height: 310px; flex: none; overflow: hidden; background: #d8d3cf; }
.map-art { width: 1230px; height: 310px; }
.flood { fill: none; stroke: #2f86ff; stroke-width: 3px; stroke-linejoin: round; stroke-linecap: round; }
.flood path { vector-effect: non-scaling-stroke; }
.poi { fill: #555; }
.ml { font-family: "Noto Sans", sans-serif; font-size: 13.500px; fill: #8a8585; stroke: #e6e2de; stroke-width: 2px; paint-order: stroke; }
.ml-road { font-size: 14px; fill: #6a6a6a; }
.ml-city { font-size: 20px; font-weight: 500; fill: #2c2c2c; letter-spacing: .5px; stroke: #eee; }
.zoom-ctl { position: absolute; left: 13px; top: 14px; width: 40px; border: 2px solid rgba(0, 0, 0, .3); border-radius: 4px; background-clip: padding-box; }
.zoom-btn { display: block; height: 38px; text-align: center; background: #fff; font: 400 30px/36px "Liberation Sans", sans-serif; color: #000; }
.zoom-btn:first-child { border-bottom: 1px solid #ccc; border-radius: 2px 2px 0 0; }
.zoom-btn:last-child { border-radius: 0 0 2px 2px; }
.layers-ctl { position: absolute; left: 1159px; top: 13px; width: 58px; height: 60px; background: #fff; border: 2px solid rgba(0, 0, 0, .3); border-radius: 5px; background-clip: padding-box; padding: 10px 9px; }
.layers-ctl svg { width: 36px; height: 36px; }

/* link tooltip */
.status { position: absolute; left: 0; bottom: 0; width: 190px; height: 27px; line-height: 27px; padding-left: 5px; background: #3c3c3c; color: #c8c8c8; font-size: 15px; letter-spacing: -.42px; border-top-right-radius: 3px; white-space: nowrap; z-index: 3; }
```
